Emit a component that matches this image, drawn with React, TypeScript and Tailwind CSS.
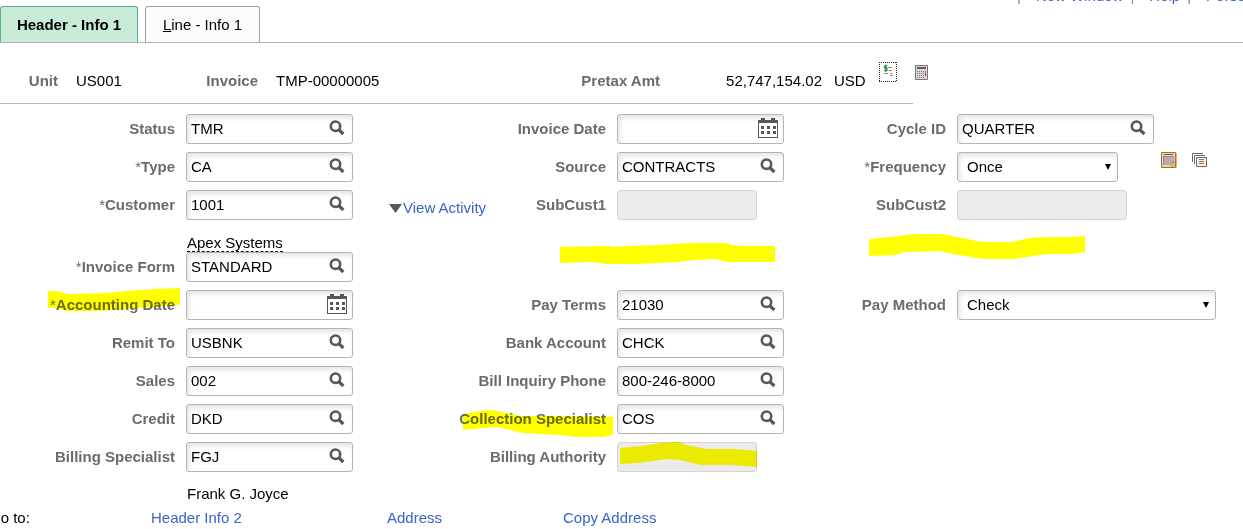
import { useId, useState } from 'react'
import type { ReactNode } from 'react'
import clsx from 'clsx'

function SearchIcon() {
  return (
    <svg width="16" height="16" viewBox="0 0 16 16" fill="none" stroke="#585858">
      <circle cx="6.5" cy="6.2" r="4.7" strokeWidth="2.6" />
      <path d="M10 9.8L14.4 14" strokeWidth="3.2" />
    </svg>
  )
}

function CalendarIcon() {
  return (
    <svg width="20" height="20" viewBox="0 0 20 20" fill="#585858">
      <path d="M0 2H20V20H0Z M1 5V19H19V5Z" fillRule="evenodd" />
      <path d="M3 0H7V3H3Z M13 0H17V3H13Z" />
      <path d="M3 8h3v3h-3z M9 8h3v3h-3z M15 8h3v3h-3z M3 13h3v3h-3z M9 13h3v3h-3z M15 13h3v3h-3z" />
    </svg>
  )
}

function AmountNoteIcon() {
  return (
    <svg width="18" height="20" viewBox="0 0 18 20" fill="none">
      <path d="M0 .5H18M0 19.5H18M.5 0V20M17.5 0V20" stroke="#222" strokeDasharray="1 1" />
      <path d="M8.5 4L5.5 4V6H8V8.5H5M6.8 2.5V10" stroke="#1f8a35" strokeWidth="1.1" />
      <path d="M9 5.5H13M10 8.5H13M5 11.5H9M11 11.5H13M11 13.5H14" stroke="#8b8b8b" />
    </svg>
  )
}

function CalculatorIcon() {
  return (
    <svg width="13" height="15" viewBox="0 0 13 15">
      <path d="M.5 .5H12.5V14.5H.5Z" fill="#d9d6d6" stroke="#777" />
      <path d="M2 2H11V4H2Z" fill="#5c5c5c" />
      <path d="M2.5 6V13M4.5 6V13M6.5 6V13M8.5 6V13" stroke="#777" strokeDasharray="1 1" />
      <path d="M10.5 6V8" stroke="#777" />
      <path d="M10.5 8V11" stroke="#e03a2c" />
    </svg>
  )
}

function ScheduleIcon() {
  return (
    <svg width="16" height="16" viewBox="0 0 16 16">
      <path d="M.5 .5H14.5V15.5H.5Z" fill="#f6cf9a" stroke="#a86b31" />
      <path d="M15.5 1V15.5" stroke="#e9ad67" />
      <path d="M3 2.5H12" stroke="#55598c" />
      <path d="M2 4H13V11H11V13H2Z" fill="#53588b" />
      <path d="M2 6H13M2 8H13M2 10H12M2 12H11M4 4V13M6 4V13M8 4V13M10 4V13M12 4V11" stroke="#f2dcc0" strokeWidth=".8" />
      <path d="M11 15V11H15Z" fill="#fff3c0" stroke="#a86b31" strokeWidth=".7" />
    </svg>
  )
}

function CopiesIcon() {
  return (
    <svg width="16" height="14" viewBox="0 0 16 14" fill="none" stroke="#6b6b6b">
      <path d="M.5 9V.5H11M2.5 11V2.5H13" />
      <path d="M4.5 4.5H14.5V13.5H4.5Z" fill="#fbf3df" />
      <path d="M7 6.5H12M7 8.5H12M7 10.5H12" stroke="#9a7c4c" />
    </svg>
  )
}

function Highlight({ width, height, points, className }: { width: number; height: number; points: string; className: string }) {
  return (
    <svg
      aria-hidden="true"
      width={width}
      height={height}
      viewBox={`0 0 ${width} ${height}`}
      className={clsx('pointer-events-none absolute mix-blend-multiply', className)}
    >
      <polygon points={points} fill="#ffff00" />
    </svg>
  )
}

function Row({ children, short }: { children: ReactNode; short?: boolean }) {
  return (
    <div
      className={clsx(
        'grid grid-cols-[175px_minmax(0,259fr)_150px_minmax(0,228fr)_90px_minmax(0,286fr)] gap-x-[11px]',
        short ? 'h-6' : 'pb-2'
      )}
    >
      {children}
    </div>
  )
}

interface FieldProps {
  label: string
  required?: boolean
  value?: string
  kind?: 'lookup' | 'date' | 'select' | 'readonly'
  width?: string
  labelMark?: ReactNode
  children?: ReactNode
}

function Field({ label, required, value = '', kind = 'lookup', width = 'w-[167px]', labelMark, children }: FieldProps) {
  const id = useId()
  const [text, setText] = useState(value)

  return (
    <>
      <div className="relative flex h-[30px] items-center justify-end">
        <label htmlFor={id} className="whitespace-nowrap font-bold text-[#6b6b6b]">
          {required && <span className="font-normal">*</span>}
          {label}
        </label>
        {labelMark}
      </div>
      <div className="relative flex h-[30px]">
        {kind === 'readonly' && (
          <input
            id={id}
            readOnly
            value={text}
            className={clsx('h-full shrink-0 rounded-[3px] border border-[#d5d5d5] bg-[#ebebeb] px-1', width)}
          />
        )}
        {kind === 'select' && (
          <div className={clsx('relative h-full shrink-0', width)}>
            <select
              id={id}
              defaultValue={value}
              className="h-full w-full appearance-none rounded-[3px] border border-[#b5b5b5] bg-white pl-[9px] shadow-[inset_2px_3px_5px_#e4e4e4]"
            >
              <option>{value}</option>
            </select>
            <svg width="6" height="6" viewBox="0 0 6 6" className="pointer-events-none absolute right-[7px] top-3">
              <path d="M0 0H6L3 6Z" fill="#000" />
            </svg>
          </div>
        )}
        {(kind === 'lookup' || kind === 'date') && (
          <div
            className={clsx(
              'flex h-full shrink-0 items-center rounded-[3px] border border-[#b5b5b5] bg-white shadow-[inset_2px_3px_5px_#e4e4e4]',
              width
            )}
          >
            <input
              id={id}
              value={text}
              onChange={(e) => setText(e.target.value)}
              className="h-full min-w-0 flex-1 bg-transparent pb-[2px] pl-1 outline-none"
            />
            <button
              type="button"
              aria-label={kind === 'date' ? `Choose ${label}` : `Look up ${label}`}
              className={kind === 'date' ? 'mr-[5px] pb-[2px]' : 'mr-[7px] pb-[2px]'}
            >
              {kind === 'date' ? <CalendarIcon /> : <SearchIcon />}
            </button>
          </div>
        )}
        {children}
      </div>
    </>
  )
}

export default function App() {
  return (
    <div className="overflow-x-hidden bg-white font-['Liberation_Sans',Arial,sans-serif] text-[15px] leading-5 text-black">
      <nav className="ml-auto flex h-[6px] w-[226px] items-end overflow-hidden whitespace-nowrap text-[#3a63c8]">
        <span className="text-[#8a8a8a]">|</span>
        <a href="#" className="ml-[15px]">New Window</a>
        <span className="ml-[7px] text-[#8a8a8a]">|</span>
        <a href="#" className="ml-[15px]">Help</a>
        <span className="ml-[7px] text-[#8a8a8a]">|</span>
        <a href="#" className="ml-[15px]">Personalize Page</a>
      </nav>

      <div className="flex gap-[7px] border-b border-[#b5b5b5]">
        <button
          type="button"
          className="h-9 w-[138px] rounded-t-[3px] border border-b-0 border-[#58b17e] bg-[#c8ead6] font-bold"
        >
          Header - Info 1
        </button>
        <button
          type="button"
          className="h-9 w-[115px] rounded-t-[3px] border border-b-0 border-[#a0a0a0] bg-[#fcfcfc]"
        >
          <span className="underline">L</span>ine - Info 1
        </button>
      </div>

      <div className="grid h-[60px] grid-cols-[58px_104px_60px_276px_90px_1fr] gap-x-[18px] pt-7">
        <span className="text-right font-bold text-[#6b6b6b]">Unit</span>
        <span>US001</span>
        <span className="text-right font-bold text-[#6b6b6b]">Invoice</span>
        <span>TMP-00000005</span>
        <span className="whitespace-nowrap text-right font-bold text-[#6b6b6b]">Pretax Amt</span>
        <div className="flex">
          <span className="w-[144px] text-right">52,747,154.02</span>
          <span className="ml-3">USD</span>
          <div className="-mt-[9px] ml-[13px] flex items-center gap-[18px] self-start">
            <button type="button" aria-label="Amount details">
              <AmountNoteIcon />
            </button>
            <button type="button" aria-label="Calculate">
              <CalculatorIcon />
            </button>
          </div>
        </div>
      </div>
      <hr className="w-[913px] max-w-full border-[#b5b5b5]" />

      <form className="pt-[10px]">
        <Row>
          <Field label="Status" value="TMR" />
          <Field label="Invoice Date" kind="date" />
          <Field label="Cycle ID" value="QUARTER" width="w-[197px]" />
        </Row>
        <Row>
          <Field label="Type" required value="CA" />
          <Field label="Source" value="CONTRACTS" />
          <Field label="Frequency" required kind="select" value="Once" width="w-[161px]">
            <div className="ml-[43px] flex items-center gap-[15px] self-start">
              <button type="button" aria-label="Schedule">
                <ScheduleIcon />
              </button>
              <button type="button" aria-label="Copies">
                <CopiesIcon />
              </button>
            </div>
          </Field>
        </Row>
        <Row>
          <Field label="Customer" required value="1001">
            <a href="#" className="ml-9 flex shrink-0 items-center gap-px self-end leading-6 text-[#3a63c8]">
              <svg width="13" height="9" viewBox="0 0 13 9">
                <path d="M0 0H13L6.5 9Z" fill="#585858" />
              </svg>
              View Activity
            </a>
          </Field>
          <Field label="SubCust1" kind="readonly" width="w-[140px]" />
          <Field label="SubCust2" kind="readonly" width="w-[170px]" />
        </Row>
        <Row short>
          <div className="col-start-2 flex items-end">
            <span className="ml-px border-b border-dashed border-black leading-4">Apex Systems</span>
          </div>
          <div className="relative col-start-4">
            <Highlight
              width={215}
              height={21}
              className="-left-[57px] top-[15px]"
              points="0,4 50,3 51,4 68,3 97,2 115,1 130,0 167,0 171,2 183,3 215,3 215,19 167,19 155,16 135,17 117,19 73,21 47,21 33,19 0,20"
            />
          </div>
          <div className="relative col-start-6">
            <Highlight
              width={216}
              height={26}
              className="-left-[88px] top-[5px]"
              points="0,6 11,5 28,3 46,1 74,1 88,4 108,8 118,9 143,9 161,5 178,4 201,4 216,3 216,19 204,21 181,21 164,23 146,26 115,26 96,23 84,21 71,18 36,19 26,22 0,23"
            />
          </div>
        </Row>
        <Row>
          <Field label="Invoice Form" required value="STANDARD" />
        </Row>
        <Row>
          <Field
            label="Accounting Date"
            required
            kind="date"
            labelMark={
              <Highlight
                width={132}
                height={23}
                className="-right-[5px] -top-[2px]"
                points="0,3 9,3 20,6 60,5 77,3 108,1 132,0 132,17 102,19 78,21 48,23 18,23 9,20 0,20"
              />
            }
          />
          <Field label="Pay Terms" value="21030" />
          <Field label="Pay Method" kind="select" value="Check" width="w-[259px]" />
        </Row>
        <Row>
          <Field label="Remit To" value="USBNK" />
          <Field label="Bank Account" value="CHCK" />
        </Row>
        <Row>
          <Field label="Sales" value="002" />
          <Field label="Bill Inquiry Phone" value="800-246-8000" />
        </Row>
        <Row>
          <Field label="Credit" value="DKD" />
          <Field
            label="Collection Specialist"
            value="COS"
            labelMark={
              <Highlight
                width={150}
                height={28}
                className="-right-[7px] top-[5px]"
                points="0,5 17,2 29,1 39,3 57,7 87,7 150,8 150,26 140,28 114,28 97,26 60,24 34,18 20,19 0,21"
              />
            }
          />
        </Row>
        <Row>
          <Field label="Billing Specialist" value="FGJ" />
          <Field label="Billing Authority" kind="readonly" width="w-[140px]">
            <Highlight
              width={137}
              height={25}
              className="left-[3px] top-0"
              points="0,6 22,4 40,1 58,0 70,4 87,7 113,7 137,9 137,25 113,23 80,23 60,18 47,17 33,19 17,21 0,22"
            />
          </Field>
        </Row>
        <Row short>
          <div className="col-start-2 flex items-end">
            <span className="ml-px">Frank G. Joyce</span>
          </div>
        </Row>
      </form>

      <div className="grid grid-cols-[151px_236px_176px_1fr] pt-1">
        <span className="-ml-[11px]">Go to:</span>
        <a href="#" className="text-[#3a63c8]">Header Info 2</a>
        <a href="#" className="text-[#3a63c8]">Address</a>
        <a href="#" className="text-[#3a63c8]">Copy Address</a>
      </div>
    </div>
  )
}
